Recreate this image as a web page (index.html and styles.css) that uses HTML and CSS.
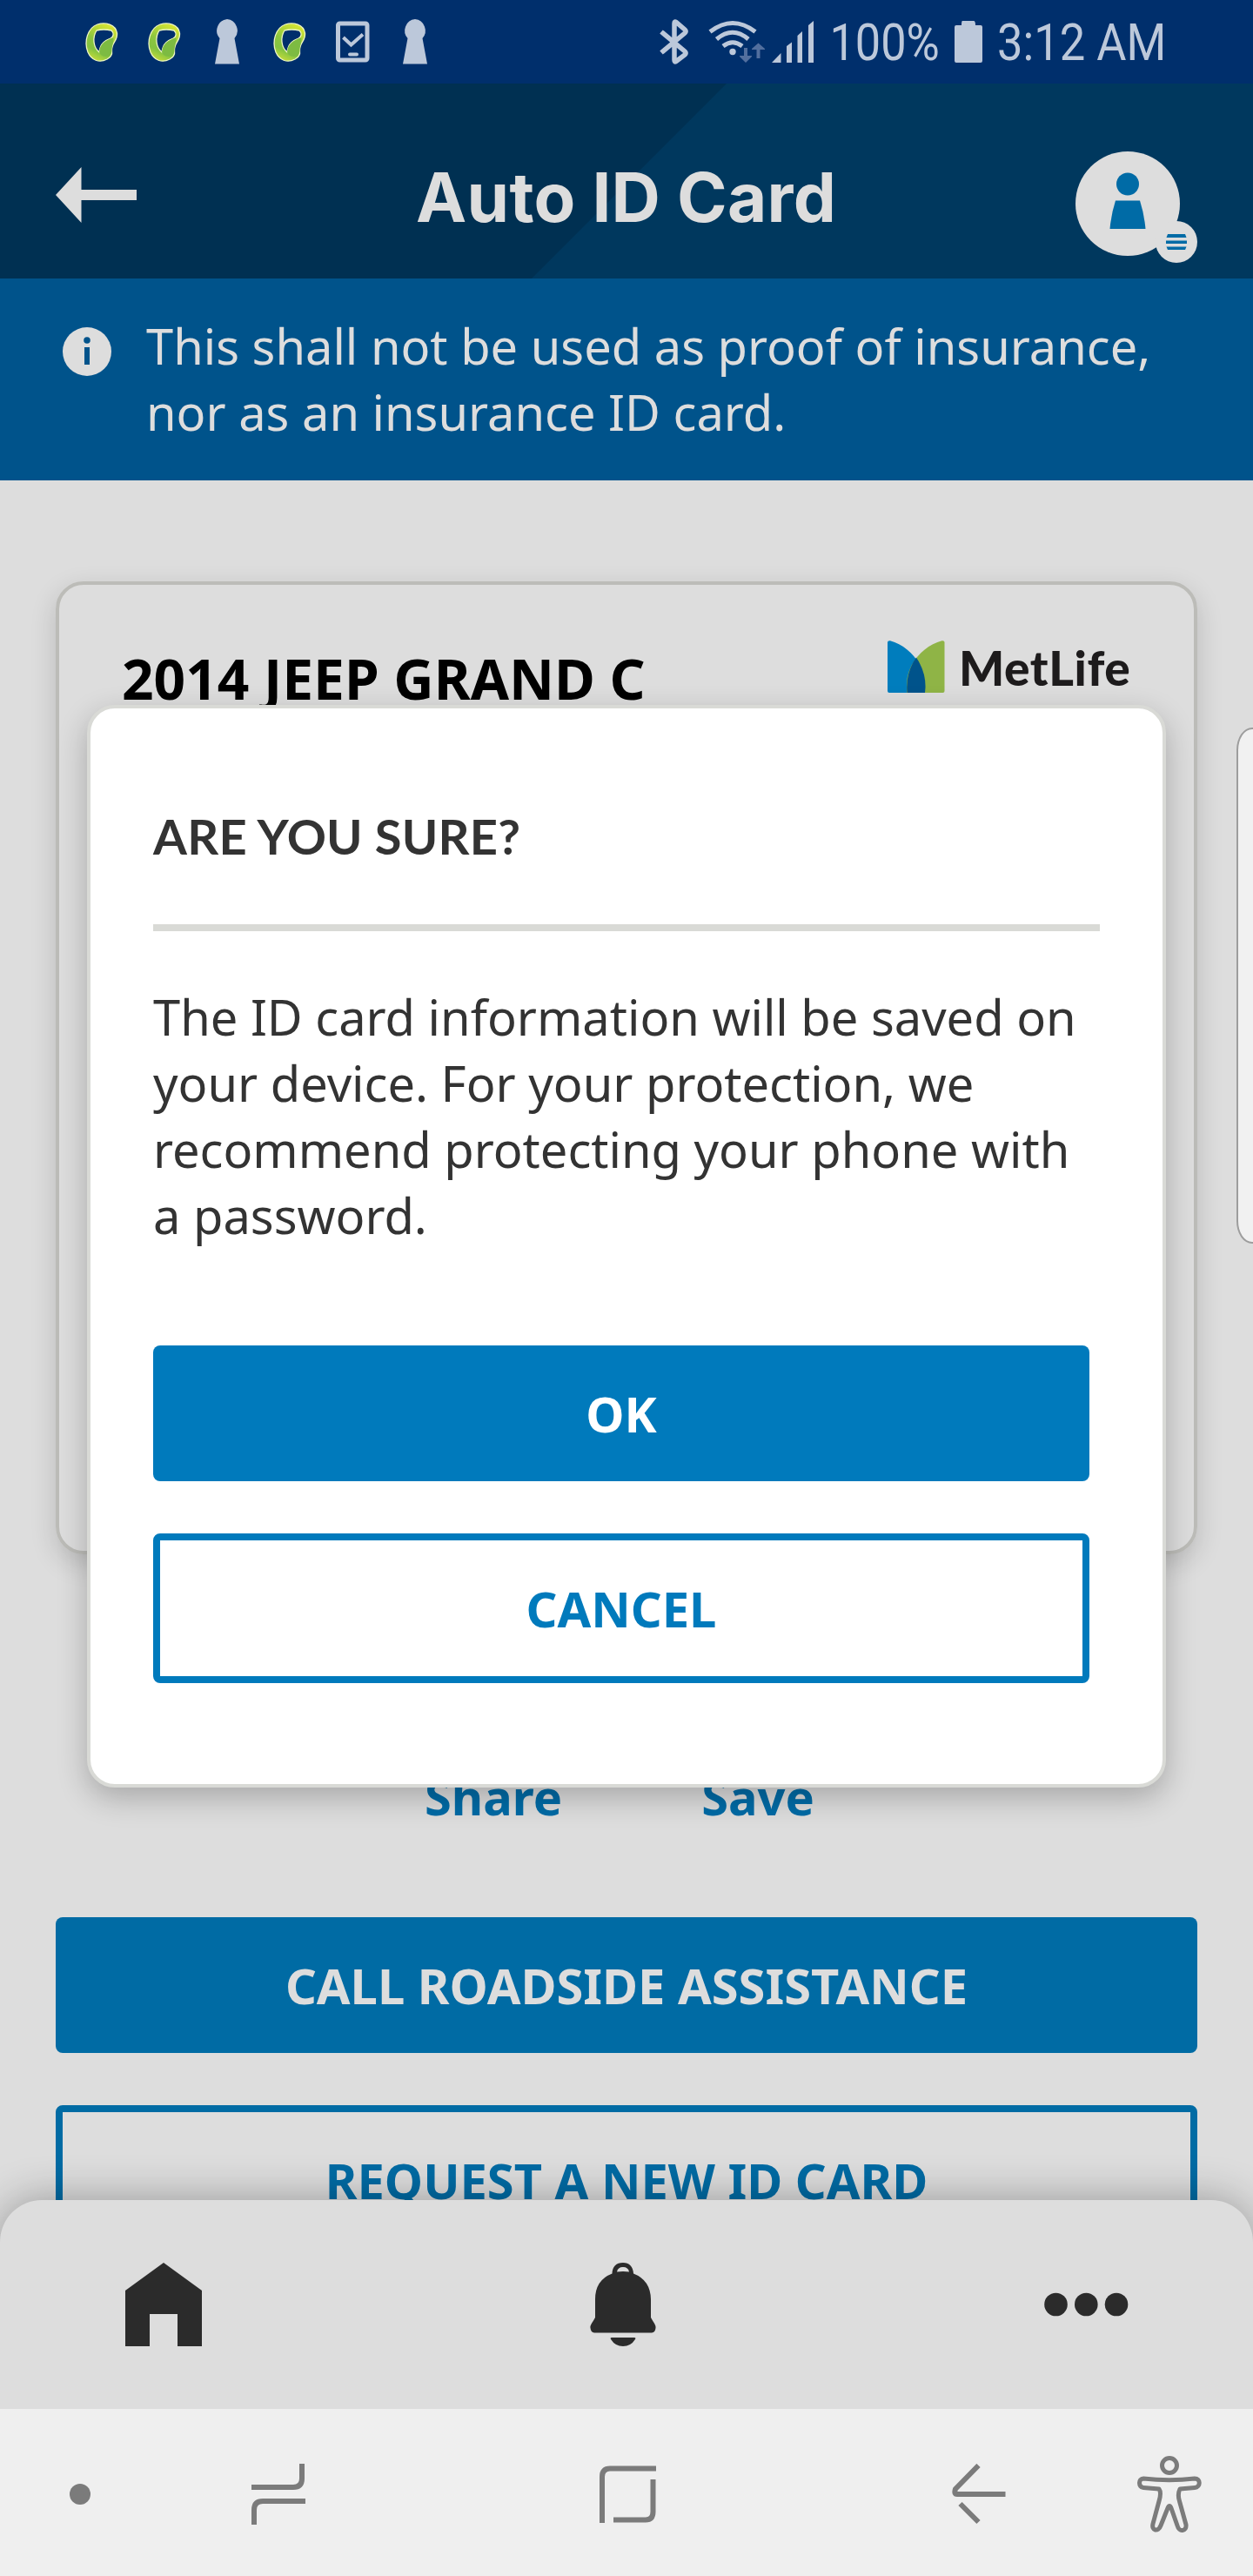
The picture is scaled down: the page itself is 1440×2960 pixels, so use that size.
FILE: index.html
```html
<!DOCTYPE html>
<html lang="en">
<head>
<meta charset="utf-8">
<title>Auto ID Card</title>
<link rel="stylesheet" href="styles.css">
</head>
<body>
<svg class="defs" width="0" height="0" aria-hidden="true">
  <defs>
    <linearGradient id="lime" x1="0.7" y1="0" x2="0.3" y2="1">
      <stop offset="0" stop-color="#dbe632"/><stop offset="0.5" stop-color="#8cc63f"/><stop offset="0.75" stop-color="#84c341"/><stop offset="1" stop-color="#c5dc3a"/>
    </linearGradient>
    <symbol id="loop" viewBox="0 0 72 96">
      <path d="M31 28C40 25 52 28 53.500 38C54.500 47 47 49 47.500 58C48.500 64 45 66 42 68C33 73 24 69 20 60C15 47 20 32 31 28ZM30 35C25 43 26 54 33 60C34 49 41 46 46 44C50 42 50 38 47 35Q38 33 30 35Z" fill="url(#lime)" fill-rule="evenodd" stroke="#eef6c4" stroke-width="1.300"/>
      <path d="M33 60C34 49 41 47 47 44C52 41 48 50 47.500 57C48 65 40 67 35 63Z" fill="#7dbb42"/>
    </symbol>
    <symbol id="keyhole" viewBox="0 0 72 96">
      <path d="M36 22A13.300 13.300 0 0 1 44.500 44L50 73.500H22L27.500 44A13.300 13.300 0 0 1 36 22Z" fill="#bcc8da"/>
    </symbol>
  </defs>
</svg>
<div class="screen">
  <div class="status">
    <div class="notices">
      <svg class="notice"><use href="#loop"/></svg>
      <svg class="notice"><use href="#loop"/></svg>
      <svg class="notice"><use href="#keyhole"/></svg>
      <svg class="notice"><use href="#loop"/></svg>
      <svg class="notice" viewBox="0 0 72 96" fill="none" stroke="#bcc8da">
        <rect x="19.500" y="27" width="33.500" height="42" rx="2" stroke-width="5"/>
        <path d="M25.500 43L34.500 51.500L48 39.500" stroke-width="4"/><path d="M33 62.500H41" stroke-width="4" stroke-linecap="round"/>
      </svg>
      <svg class="notice"><use href="#keyhole"/></svg>
    </div>
    <div class="signals">
      <svg width="200" height="96" viewBox="750 0 200 96" fill="none" stroke="#bcc8da">
        <path d="M760 36.500L787 59Q789 61 787 63L777 70.500Q775 72 775 69V27Q775 24 777 25.500L787 34Q789 36 787 38L760 60.500" stroke-width="5.500"/>
        <path d="M816 36.500Q842 16.500 868 36.500M823.500 45Q842 29.500 860 45M831 53Q842 44.500 853 53" stroke-width="5"/>
        <circle cx="842" cy="59.500" r="3.700" fill="#bcc8da" stroke="none"/>
        <g fill="#526f9e" stroke="none"><path d="M855 55H859V64H864V65L857 72L850 65V64H855Z"/><path d="M869.500 67V57H864V56L871.500 49.500L879 56V57H873.500V67Z"/></g>
        <path d="M887 72L897.500 61V72ZM904 72V53L910 48.500V72ZM916.500 72V41L922 36V72ZM929 72V29L935 24V72Z" fill="#bcc8da" stroke="none"/>
      </svg>
      <span class="stat percent">100%</span>
      <svg class="battery" width="32" height="96" viewBox="0 0 32 96"><path d="M9 24H22Q24 24 24 29H30Q32 29 32 31V70Q32 72 30 72H2Q0 72 0 70V31Q0 29 2 29H8Q8 24 9 24Z" fill="#bcc8da"/></svg>
      <span class="stat time">3:12 AM</span>
    </div>
  </div>

  <header class="header">
    <svg class="back" width="94" height="64" viewBox="0 0 94 64"><path d="M0 32L29.500 0V26H93V38H29.500V64Z" fill="#ddd"/></svg>
    <h1 class="title">Auto ID Card</h1>
    <svg class="avatar" width="140" height="130" viewBox="0 0 140 130">
      <g fill="#ddd"><circle cx="60" cy="60" r="60"/><circle cx="116" cy="104" r="24"/></g>
      <g fill="#006ba6"><circle cx="60" cy="37.500" r="13"/><path d="M46 56.500H74Q79 72 80.500 89H39.500Q41 72 46 56.500Z"/><path d="M106 95H126L127.500 99H104.500ZM104 102.500H128V106H104ZM104.500 109.500H127.500L126 113H106Z"/></g>
    </svg>
  </header>

  <div class="banner">
    <svg class="info" width="56" height="56" viewBox="0 0 56 56"><circle cx="28" cy="28" r="28" fill="#ddd"/><circle cx="28" cy="15" r="3.800" fill="#00538b"/><path d="M25 23H31V43H25Z" fill="#00538b"/></svg>
    <p class="banner-text">This shall not be used as proof of insurance, nor as an insurance ID card.</p>
  </div>

  <main class="content">
    <section class="card">
      <h2 class="vehicle">2014 JEEP GRAND C</h2>
      <div class="brand">
        <svg width="66" height="60" viewBox="0 0 66 60">
          <path d="M0 2Q0 0 3 0.300C24 6 43 27 43 51Q43.500 56 42.500 60H2Q0 60 0 58Z" fill="#007dbd"/>
          <path d="M65.500 2Q65.500 0 62.500 0.300C41 6 22 27 22 51V60H63.500Q65.500 60 65.500 58Z" fill="#8fb446"/>
          <path d="M33 19.500Q44 36 43.500 54L43 60H22.500Q20.500 37 33 19.500Z" fill="#00538b"/>
        </svg>
        <span class="brand-name">MetLife</span>
      </div>
    </section>
    <div class="links"><a class="link share">Share</a><a class="link save">Save</a></div>
    <button class="btn solid dim">CALL ROADSIDE ASSISTANCE</button>
    <button class="btn outline dim">REQUEST A NEW ID CARD</button>
  </main>

  <nav class="tabs">
    <svg width="88" height="96" viewBox="0 0 88 96"><path d="M44 0L88 32V96H60V59H28V96H0V32Z" fill="#2b2b2b"/></svg>
    <svg width="76" height="96" viewBox="0 0 76 96"><path d="M6 42Q6 20 25.500 12.500Q26 0 38 0Q49 0 50 12.500Q69.500 20 70 42V63C74 70 76 72 75.500 75Q75 80 71 80.500H5Q1 80 0.500 75C0 72 2 70 6 63ZM31 10.500Q38 9.500 45 10.500Q44 5 38 5Q32 5 31 10.500Z" fill="#2b2b2b"/><path d="M25 86H51Q53 86 52 88Q47 96 38 96Q29 96 24 88Q23 86 25 86Z" fill="#2b2b2b"/></svg>
    <svg width="97" height="28" viewBox="0 0 97 28" fill="#2b2b2b"><circle cx="13.500" cy="14" r="13.300"/><circle cx="48.300" cy="14" r="13.300"/><circle cx="83" cy="14" r="13.300"/></svg>
  </nav>

  <div class="sysnav">
    <svg class="sys-dot" width="24" height="24"><circle cx="12" cy="12" r="12" fill="#7b7b7b"/></svg>
    <svg class="sys-recent" width="62" height="72" viewBox="0 0 62 72"><path d="M0 28H48Q58 28 58 18V1M62 44H13Q3 44 3 54V71" fill="none" stroke="#7b7b7b" stroke-width="6"/></svg>
    <svg class="sys-home" width="65" height="66" viewBox="0 0 65 66"><path d="M65 3.500H12Q3 3.500 3 13V66M61.500 16V53Q61.500 62.500 53 62.500H16" fill="none" stroke="#7b7b7b" stroke-width="6"/></svg>
    <svg class="sys-back" width="62" height="70" viewBox="0 0 62 70"><path d="M30.500 2L4 29Q2 35 6 35H61.500M9.500 46L30.500 67" fill="none" stroke="#7b7b7b" stroke-width="6"/></svg>
    <svg class="sys-access" width="74" height="88" viewBox="0 0 74 88" fill="none" stroke="#7b7b7b" stroke-width="5"><circle cx="37" cy="11" r="8.500"/><path d="M7 26Q37 29.500 66 26C73 26 73 36 66 36.500L49 38Q46 44 48.500 52L56 79C57 87 48 88 46 80L39 60Q37 55 35 60L27 80C24 88 16 86 18 78L25 52Q28 42 25 38L7 36.500C1 36 1 26 7 26Z" stroke-linejoin="round"/></svg>
  </div>

  <div class="edge-handle"></div>

  <div class="modal" role="dialog">
    <h2 class="modal-title">ARE YOU SURE?</h2>
    <hr class="rule">
    <p class="modal-text">The ID card information will be saved on your device. For your protection, we recommend protecting your phone with a password.</p>
    <button class="btn solid ok">OK</button>
    <button class="btn outline cancel">CANCEL</button>
  </div>
</div>
</body>
</html>
```
FILE: styles.css
```css
* { box-sizing: border-box; }
body { margin: 0; background: #ddd; font-family: "Noto Sans", sans-serif; font-size: 56px; line-height: 76px; }
h1, h2, p { margin: 0; }
svg { display: block; flex: none; }
.defs { position: absolute; }
.screen { position: relative; width: 1440px; height: 2960px; overflow: hidden; display: flex; flex-direction: column; }

.status { height: 96px; flex: none; background: #002f6c; display: flex; justify-content: space-between; padding-left: 81px; }
.notices, .signals { display: flex; }
.notice { width: 72px; height: 96px; }
.signals { width: 690px; }
.stat { font-family: Roboto, sans-serif; font-size: 60px; line-height: 96px; color: #bcc8da; white-space: nowrap; transform-origin: 0 50%; transform: translateY(1px) scaleX(0.87); }
.percent { width: 147px; padding-left: 4px; }
.time { margin-left: 17px; transform: translateY(1px) scaleX(0.875); }

.header { height: 224px; flex: none; display: flex; align-items: flex-start; padding-left: 64px; background: linear-gradient(135deg, #003052 590px, #00385e 591px); }
.back { margin-top: 96px; }
.title { width: 480px; margin: 86px 0 0 320px; font: 700 78px/90px Inter, sans-serif; color: #ddd; white-space: nowrap; letter-spacing: 0.3px; }
.avatar { margin: 78px 0 0 278px; }

.banner { height: 232px; flex: none; background: #00538b; color: #ddd; display: flex; padding: 39px 64px 0 72px; }
.info { margin-top: 17px; }
.banner-text { margin-left: 40px; width: 1190px; }

.content { height: 1976px; flex: none; overflow: hidden; display: flex; flex-direction: column; padding: 116px 64px 0; }
.card { height: 1118px; flex: none; border: 4px solid #bcbcb8; border-radius: 32px; box-shadow: 0 10px 30px rgba(0,0,0,.16); display: flex; justify-content: space-between; align-items: flex-start; padding: 64px 71px 0 72px; }
.vehicle { font-size: 64px; line-height: 87px; font-weight: 700; color: #000; white-space: nowrap; }
.brand { display: flex; width: 281px; }
.brand-name { font: 900 55px/60px Lato, sans-serif; letter-spacing: 0.6px; color: #1d1b1c; margin: 1px 0 0 16px; }
.links { display: flex; margin: 240px 0 101px 424px; height: 76px; flex: none; gap: 160px; }
.link { color: #006ba6; font-weight: 700; }

.btn { display: block; flex: none; width: 100%; font: 700 56px/76px "Noto Sans", sans-serif; padding: 40px 0; border: 0; border-radius: 8px; text-align: center; white-space: nowrap; }
.solid { background: #007abc; color: #fff; }
.outline { background: none; border: 8px solid #007abc; color: #007abc; }
.solid.dim { background: #006ba4; color: #ddd; margin-bottom: 60px; }
.outline.dim { border-color: #006ba4; color: #006ba4; }

.tabs { position: relative; height: 240px; flex: none; background: #ddd; border-radius: 48px 48px 0 0; box-shadow: 0 0 50px rgba(0,0,0,.32); display: flex; justify-content: space-between; align-items: center; padding: 0 143px 0 144px; }
.sysnav { position: relative; height: 192px; flex: none; background: #efefef; display: flex; align-items: center; padding: 4px 60px 0 80px; }
.sys-recent { margin-left: 185px; }
.sys-home { margin-left: 338px; }
.sys-back { margin-left: 340px; }
.sys-access { margin-left: 151px; }

.edge-handle { position: absolute; left: 1421px; top: 836px; width: 40px; height: 593px; background: #f1f1f1; border: 2px solid #9d9d9d; border-radius: 18px / 26px; }

.modal { position: absolute; left: 100px; top: 810px; width: 1240px; height: 1244px; background: #fff; border: 4px solid #d9dad6; border-radius: 32px; box-shadow: 0 12px 34px rgba(0,0,0,.24); padding: 108px 84px 0 72px; color: #333; }
.modal-title { font: 700 56px/76px Lato, sans-serif; white-space: nowrap; letter-spacing: 0.25px; padding-top: 1px; margin-bottom: -1px; }
.rule { margin: 64px 0 60px; border: 0; height: 8px; width: 1088px; background: #d9dad6; }
.ok { margin: 112px 0 60px; width: 1076px; }
.cancel { width: 1076px; }
```
